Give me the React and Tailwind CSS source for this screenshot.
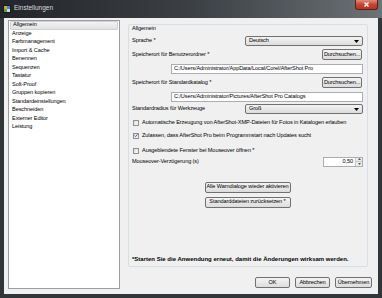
import React from "react";

const sections = [
    "Allgemein",
    "Anzeige",
    "Farbmanagement",
    "Import & Cache",
    "Benennen",
    "Sequenzen",
    "Tastatur",
    "Soft-Proof",
    "Gruppen kopieren",
    "Standardeinstellungen",
    "Beschneiden",
    "Externer Editor",
    "Leistung",
];

const Button = ({ children, className = "" }) => (
    <div
        className={`flex items-center justify-center h-[11px] rounded-[2px] border border-[#707070] bg-linear-to-b from-[#f4f4f4] to-[#dcdcdc] text-[5.6px] leading-none whitespace-nowrap text-black ${className}`}
    >
        {children}
    </div>
);

const Combo = ({ value }) => (
    <div className="flex items-center justify-between w-[118px] h-[10px] rounded-[2px] border border-[#707070] bg-linear-to-b from-[#f4f4f4] to-[#dcdcdc] pl-[3px] pr-[3px] leading-none">
        <span>{value}</span>
        <svg width="5" height="3" viewBox="0 0 5 3">
            <path d="M0 0 H5 L2.5 3 Z" fill="#000" />
        </svg>
    </div>
);

const Field = ({ value }) => (
    <div className="flex items-center w-[192px] h-[10px] border border-[#abadb3] bg-white pl-[2px] leading-none whitespace-nowrap">
        {value}
    </div>
);

const Check = ({ checked, label }) => (
    <div className="flex items-center gap-[3px] h-[8px]">
        <div className="flex items-center justify-center w-[6px] h-[6px] ml-[1px] border border-[#8e8f8f] bg-linear-to-br from-[#dcdcdc] to-[#fbfbfb]">
            {checked && (
                <svg width="5" height="5" viewBox="0 0 5 5">
                    <path d="M0.6 2.6 L2 4 L4.5 0.8" stroke="#2a4fa8" strokeWidth="1" fill="none" />
                </svg>
            )}
        </div>
        <span className="leading-none whitespace-nowrap">{label}</span>
    </div>
);

const App = () => {
    return (
        <div className="w-[382px] h-[298px] flex flex-col bg-[#31363b] font-['Liberation_Sans',Arial,sans-serif] text-[5.6px] tracking-[-0.1px] text-black overflow-hidden">
            {/* Title bar */}
            <div className="h-[18px] flex items-start bg-linear-to-r from-[#22262a] via-[#3c4045] to-[#6d7277] pr-[4px]">
                <div className="flex items-center h-[17px] pl-[3px] gap-[3px]">
                    <svg width="8" height="8" viewBox="0 0 8 8">
                        <rect x="0" y="0" width="8" height="8" fill="#1b1b1b" />
                        <rect x="1" y="1" width="3" height="3" fill="#e8a020" />
                        <rect x="4" y="1" width="3" height="3" fill="#3a8ad6" />
                        <rect x="1" y="4" width="3" height="3" fill="#49a84a" />
                        <rect x="4" y="4" width="3" height="3" fill="#d8d8d8" />
                    </svg>
                    <span className="text-[6.5px] tracking-normal text-[#dcdcdc] leading-none">Einstellungen</span>
                </div>
                <div className="ml-auto w-[23px] h-[10px] rounded-b-[3px] border border-t-0 border-[#5a2020] bg-linear-to-b from-[#e08a7a] via-[#c8442e] to-[#b8361f] flex items-center justify-center">
                    <svg width="5" height="5" viewBox="0 0 5 5">
                        <path d="M0.5 0.5 L4.5 4.5 M4.5 0.5 L0.5 4.5" stroke="#fff" strokeWidth="1.3" />
                    </svg>
                </div>
            </div>

            {/* Client area */}
            <div className="flex-1 flex mx-[4px] mb-[4px] bg-[#f0f0f0] pl-[4px] pr-[6px]">
                {/* Section list */}
                <div className="w-[112px] mt-[2px] mb-[5px] border border-[#9a9da2] bg-white px-[1px]">
                    {sections.map((s, i) => (
                        <div
                            key={s}
                            className={`h-[8.5px] flex items-center pl-[2px] leading-none whitespace-nowrap ${
                                i === 0 ? "bg-linear-to-b from-[#f2f2f2] to-[#e2e2e2] border border-[#d0d0d0] rounded-[1px]" : ""
                            }`}
                        >
                            {s}
                        </div>
                    ))}
                </div>

                {/* Right side */}
                <div className="flex-1 flex flex-col ml-[8px]">
                    <div className="mt-[6px] w-[240px] h-[243px] border border-[#d5dfe5] rounded-[2px] pl-[3px] pr-[4px] flex flex-col leading-none">
                        <div className="h-[8px] flex items-center">Allgemein</div>

                        <div className="mt-[3px] h-[10px] flex items-center justify-between">
                            <span>Sprache *</span>
                            <Combo value="Deutsch" />
                        </div>

                        <div className="mt-[3px] h-[11px] flex items-center justify-between">
                            <span>Speicherort für Benutzerordner *</span>
                            <Button className="w-[40px] mr-[1px]">Durchsuchen...</Button>
                        </div>
                        <div className="mt-[4px] flex justify-end">
                            <Field value="C:/Users/Administrator/AppData/Local/Corel/AfterShot Pro" />
                        </div>

                        <div className="mt-[3px] h-[11px] flex items-center justify-between">
                            <span>Speicherort für Standardkatalog *</span>
                            <Button className="w-[40px] mr-[1px]">Durchsuchen...</Button>
                        </div>
                        <div className="mt-[4px] flex justify-end">
                            <Field value="C:/Users/Administrator/Pictures/AfterShot Pro Catalogs" />
                        </div>

                        <div className="mt-[2px] h-[10px] flex items-center justify-between">
                            <span>Standardradius für Werkzeuge</span>
                            <Combo value="Groß" />
                        </div>

                        <div className="mt-[5px]">
                            <Check label="Automatische Erzeugung von AfterShot-XMP-Dateien für Fotos in Katalogen erlauben" />
                        </div>
                        <div className="mt-[4.5px]">
                            <Check checked label="Zulassen, dass AfterShot Pro beim Programmstart nach Updates sucht" />
                        </div>
                        <div className="mt-[7px]">
                            <Check label="Ausgeblendete Fenster bei Mouseover öffnen *" />
                        </div>

                        <div className="mt-[2px] h-[10px] flex items-center justify-between">
                            <span>Mouseover-Verzögerung (s)</span>
                            <div className="flex w-[40px] h-[10px] border border-[#abadb3] bg-white">
                                <div className="flex-1 flex items-center justify-end pr-[2px]">0,50</div>
                                <div className="w-[7px] flex flex-col border-l border-[#c8c8c8]">
                                    <div className="flex-1 flex items-center justify-center bg-[#ececec] border-b border-[#c8c8c8]">
                                        <svg width="3" height="2" viewBox="0 0 3 2">
                                            <path d="M0 2 H3 L1.5 0 Z" fill="#555" />
                                        </svg>
                                    </div>
                                    <div className="flex-1 flex items-center justify-center bg-[#ececec]">
                                        <svg width="3" height="2" viewBox="0 0 3 2">
                                            <path d="M0 0 H3 L1.5 2 Z" fill="#555" />
                                        </svg>
                                    </div>
                                </div>
                            </div>
                        </div>

                        <div className="mt-[15px] flex justify-center">
                            <Button className="w-[86px] h-[10px]">Alle Warndialoge wieder aktivieren</Button>
                        </div>
                        <div className="mt-[4px] flex justify-center">
                            <Button className="w-[86px] h-[10px]">Standarddateien zurücksetzen *</Button>
                        </div>

                        <div className="mt-auto mb-[3px] h-[8px] flex items-center font-bold text-[6px] tracking-normal whitespace-nowrap">
                            *Starten Sie die Anwendung erneut, damit die Änderungen wirksam werden.
                        </div>
                    </div>

                    <div className="mt-[10px] flex justify-end gap-[5px]">
                        <Button className="w-[35px] border-[#3c7fb1] from-[#eaf6fd] to-[#bee6fd]">OK</Button>
                        <Button className="w-[35px]">Abbrechen</Button>
                        <Button className="w-[37px]">Übernehmen</Button>
                    </div>
                </div>
            </div>
        </div>
    );
};

export default App;
